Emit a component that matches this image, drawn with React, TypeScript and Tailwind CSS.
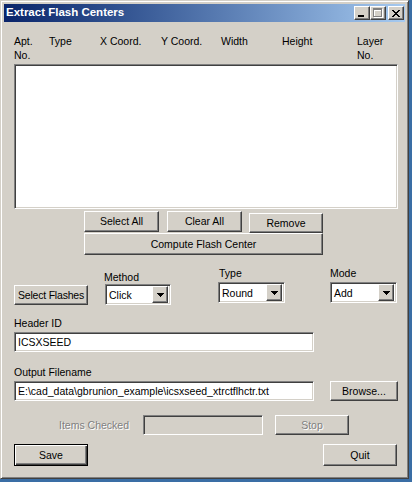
import React from 'react';

const raised =
  'border border-t-white border-l-white border-r-[#404040] border-b-[#404040] shadow-[inset_-1px_-1px_#808080] bg-[#d4d0c8]';
const sunken =
  'border border-t-[#808080] border-l-[#808080] border-r-white border-b-white shadow-[inset_1px_1px_#404040,inset_-1px_-1px_#d4d0c8]';
const grayText = 'text-[#808080] [text-shadow:1px_1px_0_#fff]';

function Btn({ label, className = '', disabled = false }: { label: string; className?: string; disabled?: boolean }) {
  return (
    <button className={`${raised} flex items-center justify-center leading-none ${disabled ? grayText : ''} ${className}`}>
      {label}
    </button>
  );
}

function Arrow() {
  return (
    <svg width="7" height="4" viewBox="0 0 7 4" shapeRendering="crispEdges">
      <path d="M0 0h7v1H0zM1 1h5v1H1zM2 2h3v1H2zM3 3h1v1H3z" fill="#000" />
    </svg>
  );
}

function Combo({ value, className = '' }: { value: string; className?: string }) {
  return (
    <div className={`${sunken} bg-white h-[21px] flex items-center p-[2px] ${className}`}>
      <span className="flex-1 pl-[1px] pt-[1px]">{value}</span>
      <div className={`${raised} w-[16px] h-[17px] flex items-center justify-center`}>
        <Arrow />
      </div>
    </div>
  );
}

function CaptionButtons() {
  return (
    <div className="ml-auto flex items-center mr-[1px]">
      <div className={`${raised} w-[16px] h-[14px] flex items-end pl-[3px] pb-[2px]`}>
        <div className="w-[6px] h-[2px] bg-black" />
      </div>
      <div className={`${raised} w-[16px] h-[14px] flex items-center justify-center`}>
        <svg width="10" height="10" viewBox="0 0 10 10" shapeRendering="crispEdges">
          <path d="M1 1h9v2H1zM1 3h1v7H1zM9 3h1v7H9zM1 9h9v1H1z" fill="#fff" />
          <path d="M0 0h9v2H0zM0 2h1v7H0zM8 2h1v7H8zM0 8h9v1H0z" fill="#808080" />
        </svg>
      </div>
      <div className={`${raised} w-[16px] h-[14px] ml-[2px] flex items-center justify-center`}>
        <svg width="8" height="7" viewBox="0 0 8 7" shapeRendering="crispEdges">
          <path
            d="M0 0h2v1H0zM6 0h2v1H6zM1 1h2v1H1zM5 1h2v1H5zM2 2h4v1H2zM3 3h2v1H3zM2 4h4v1H2zM1 5h2v1H1zM5 5h2v1H5zM0 6h2v1H0zM6 6h2v1H6z"
            fill="#000"
          />
        </svg>
      </div>
    </div>
  );
}

export default function App() {
  return (
    <div className="w-[412px] h-[482px] overflow-hidden bg-[#3a6ea5] font-['Liberation_Sans',Arial,sans-serif] text-[10.5px] leading-[14px] text-black">
      <div className="w-[409px] h-[479px] border border-t-[#d4d0c8] border-l-[#d4d0c8] border-r-[#404040] border-b-[#404040] shadow-[inset_1px_1px_#fff,inset_-1px_-1px_#808080] bg-[#d4d0c8] p-[3px] flex flex-col">
        {/* Title bar */}
        <div className="h-[18px] bg-linear-to-r from-[#0a246a] to-[#a6caf0] flex items-center pl-[2px]">
          <span className="text-white font-bold text-[11.5px] leading-none">Extract Flash Centers</span>
          <CaptionButtons />
        </div>

        {/* Body */}
        <div className="flex-1 flex flex-col pl-[10px] pt-[12px]">
          <div className="flex">
            <span className="w-[35px]">Apt.<br />No.</span>
            <span className="w-[51px]">Type</span>
            <span className="w-[61px]">X Coord.</span>
            <span className="w-[60px]">Y Coord.</span>
            <span className="w-[61px]">Width</span>
            <span className="w-[75px]">Height</span>
            <span>Layer<br />No.</span>
          </div>

          <div className={`${sunken} bg-white mt-[2px] w-[384px] h-[145px]`} />

          <div className="flex items-start mt-[2px] ml-[70px]">
            <Btn label="Select All" className="w-[75px] h-[21px]" />
            <Btn label="Clear All" className="w-[75px] h-[21px] ml-[8px]" />
            <Btn label="Remove" className="w-[74px] h-[20px] ml-[7px] mt-[2px]" />
          </div>
          <Btn label="Compute Flash Center" className="w-[239px] h-[22px] ml-[70px]" />

          <div className="flex items-start mt-[10px]">
            <Btn label="Select Flashes" className="w-[74px] h-[20px] mt-[20px] tracking-[-0.2px]" />
            <div className="flex flex-col ml-[17px]">
              <span className="mt-[5px] -ml-[1px]">Method</span>
              <Combo value="Click" className="w-[66px]" />
            </div>
            <div className="flex flex-col ml-[47px]">
              <span className="mt-[1px] ml-[1px]">Type</span>
              <Combo value="Round" className="w-[67px] mt-[2px]" />
            </div>
            <div className="flex flex-col ml-[45px]">
              <span className="mt-[1px]">Mode</span>
              <Combo value="Add" className="w-[67px] mt-[2px]" />
            </div>
          </div>

          <span className="mt-[11px]">Header ID</span>
          <div className={`${sunken} bg-white mt-[2px] w-[300px] h-[20px] flex items-center pl-[3px]`}>ICSXSEED</div>

          <span className="mt-[13px]">Output Filename</span>
          <div className="flex mt-[2px]">
            <div className={`${sunken} bg-white w-[300px] h-[20px] flex items-center pl-[3px]`}>
              E:\cad_data\gbrunion_example\icsxseed_xtrctflhctr.txt
            </div>
            <Btn label="Browse..." className="w-[68px] h-[20px] ml-[16px]" />
          </div>

          <div className="flex items-center mt-[14px]">
            <span className={`${grayText} w-[84px] ml-[45px]`}>Items Checked</span>
            <div className={`${sunken} bg-[#d4d0c8] w-[120px] h-[20px]`} />
            <Btn label="Stop" disabled className="w-[74px] h-[20px] ml-[12px]" />
          </div>

          <div className="flex mt-[9px]">
            <button className="w-[74px] h-[22px] border border-black bg-[#d4d0c8] shadow-[inset_1px_1px_#fff,inset_-1px_-1px_#404040,inset_-2px_-2px_#808080] flex items-center justify-center leading-none">
              Save
            </button>
            <Btn label="Quit" className="w-[74px] h-[22px] ml-[235px]" />
          </div>
        </div>
      </div>
    </div>
  );
}
